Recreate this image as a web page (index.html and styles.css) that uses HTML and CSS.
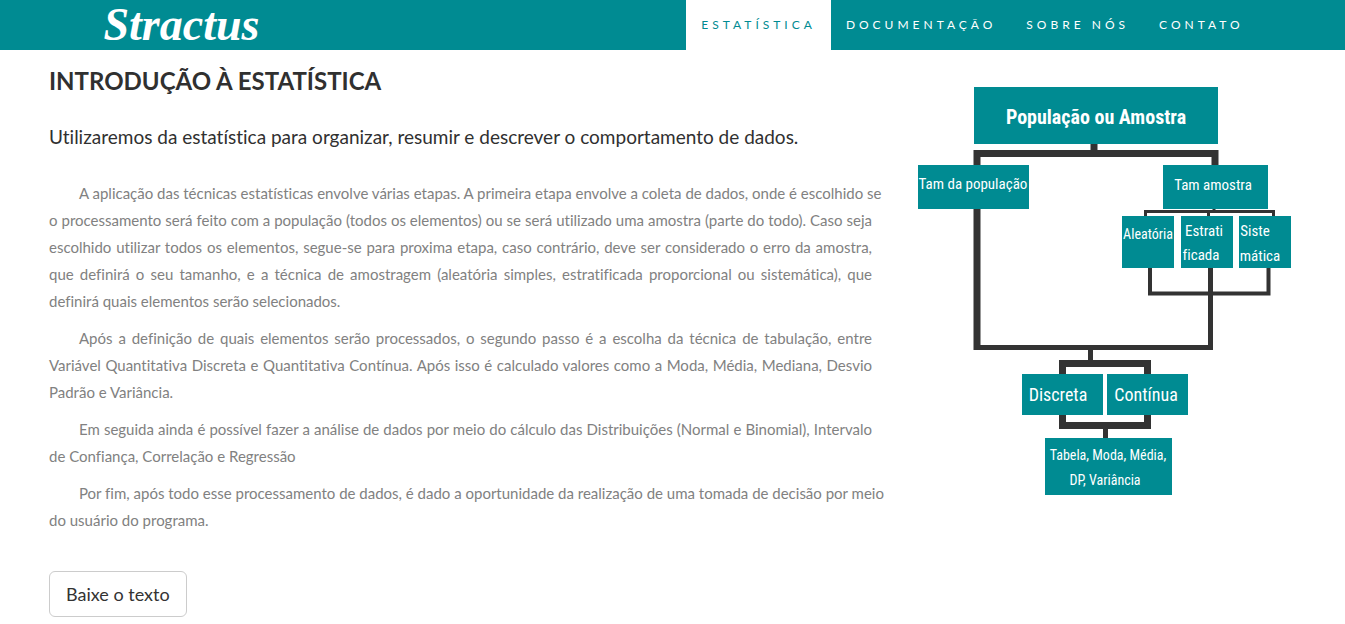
FILE: index.html
```html
<!DOCTYPE html>
<html lang="pt-br">
<head>
<meta charset="utf-8">
<meta name="viewport" content="width=device-width, initial-scale=1">
<title>Stractus - Estatística</title>
<link rel="stylesheet" href="styles.css">
</head>
<body>
<header class="navbar">
  <div class="navbar-inner">
    <a class="brand" href="#">Stractus</a>
    <nav class="menu" aria-label="Principal">
      <a class="menu-link active" href="#" aria-current="page">Estatística</a>
      <a class="menu-link" href="#">Documentação</a>
      <a class="menu-link" href="#">Sobre nós</a>
      <a class="menu-link" href="#">Contato</a>
    </nav>
  </div>
</header>
<main class="content">
  <article class="intro">
    <h1 class="title">Introdução à Estatística</h1>
    <h2 class="lead">Utilizaremos da estatística para organizar, resumir e descrever o comportamento de dados.</h2>
    <p class="text">
      <span class="line">A aplicação das técnicas estatísticas envolve várias etapas. A primeira etapa envolve a coleta de dados, onde é escolhido se</span>
      <span class="line">o processamento será feito com a população (todos os elementos) ou se será utilizado uma amostra (parte do todo). Caso seja</span>
      <span class="line">escolhido utilizar todos os elementos, segue-se para proxima etapa, caso contrário, deve ser considerado o erro da amostra,</span>
      <span class="line">que definirá o seu tamanho, e a técnica de amostragem (aleatória simples, estratificada proporcional ou sistemática), que</span>
      definirá quais elementos serão selecionados.
    </p>
    <p class="text">Após a definição de quais elementos serão processados, o segundo passo é a escolha da técnica de tabulação, entre Variável Quantitativa Discreta e Quantitativa Contínua. Após isso é calculado valores como a Moda, Média, Mediana, Desvio Padrão e Variância.</p>
    <p class="text">Em seguida ainda é possível fazer a análise de dados por meio do cálculo das Distribuições (Normal e Binomial), Intervalo de Confiança, Correlação e Regressão</p>
    <p class="text">
      <span class="line">Por fim, após todo esse processamento de dados, é dado a oportunidade da realização de uma tomada de decisão por meio</span>
      do usuário do programa.
    </p>
    <button class="download" type="button">Baixe o texto</button>
  </article>
  <figure class="figure">
    <svg class="diagram" viewBox="0 0 396 430" role="img" aria-label="Etapas da análise estatística">
      <g class="lines">
        <path stroke-width="7" d="M192 68V77M75 274V77.500H313V90"/>
        <path stroke-width="5" d="M72 271.500H308.500V190M188.500 272V285"/>
        <path stroke-width="3" d="M243.500 140V135.500H371.500V140M306.500 135V140M312 132V135"/>
        <path stroke-width="4" d="M248 191V217.500H366.500V191"/>
        <path stroke-width="7" d="M160.500 299V287.500H245.500V299M160.500 338V349.500H245.500V338"/>
        <path stroke-width="5" d="M203.500 352V363"/>
      </g>
      <g class="boxes">
        <rect x="72" y="11" width="244" height="57"/>
        <rect x="16" y="89" width="111" height="44"/>
        <rect x="261" y="89" width="105" height="44"/>
        <rect x="220" y="140" width="52" height="52"/>
        <rect x="279" y="140" width="52" height="52"/>
        <rect x="337" y="140" width="52" height="52"/>
        <rect x="120" y="298" width="81" height="41"/>
        <rect x="205" y="298" width="81" height="41"/>
        <rect x="143" y="362" width="127" height="57"/>
      </g>
      <g class="labels">
        <text class="label-main" x="194" y="48">População ou Amostra</text>
        <text class="label" x="71" y="113">Tam da população</text>
        <text class="label" x="311" y="114">Tam amostra</text>
        <text class="label-small" x="246" y="163">Aleatória</text>
        <text class="label" x="302" y="160">Estrati</text>
        <text class="label" x="299" y="184">ficada</text>
        <text class="label" x="353" y="160">Siste</text>
        <text class="label" x="358" y="185">mática</text>
        <text class="label-large" x="156" y="325">Discreta</text>
        <text class="label-large" x="244" y="325">Contínua</text>
        <text class="label-small" x="206" y="384">Tabela, Moda, Média,</text>
        <text class="label-small" x="203" y="409">DP, Variância</text>
      </g>
    </svg>
  </figure>
</main>
</body>
</html>
```
FILE: styles.css
```css
* {
  box-sizing: border-box;
}

body {
  margin: 0;
  background: #fff;
  color: #818181;
  font-family: Lato, "Open Sans", sans-serif;
  font-size: 15px;
  font-variant-ligatures: none;
  line-height: 27px;
}

.navbar {
  background: #008b92;
}

.navbar-inner {
  display: flex;
  justify-content: space-between;
  align-items: center;
  flex-wrap: wrap;
  max-width: 1172px;
  min-height: 50px;
  margin: 0 auto;
  padding-left: 17px;
}

.brand {
  color: #fff;
  font-family: "Liberation Serif", serif;
  font-size: 46px;
  font-style: italic;
  font-weight: 700;
  line-height: 50px;
  text-decoration: none;
}

.menu {
  display: flex;
  flex-wrap: wrap;
}

.menu-link {
  padding: 15px;
  color: #fff;
  font-size: 12px;
  letter-spacing: 4px;
  line-height: 20px;
  text-decoration: none;
  text-transform: uppercase;
}

.menu-link.active {
  background: #fff;
  color: #008b92;
}

.content {
  display: grid;
  grid-template-columns: minmax(0, 823fr) minmax(0, 396fr);
  gap: 30px;
  padding: 16px 47px 7px 49px;
}

.title {
  margin: 0 0 28px;
  color: #303030;
  font-size: 24px;
  font-weight: 700;
  line-height: 30px;
  text-transform: uppercase;
}

.lead {
  margin: 0 0 30px;
  color: #303030;
  font-size: 19px;
  font-weight: 400;
  line-height: 26px;
}

.text {
  margin: 0 0 10px;
  text-align: justify;
  text-indent: 30px;
}

/* Wide windows keep the edited line breaks; narrower ones reflow. */
@media (min-width: 1340px) {
  .line {
    display: block;
    text-align-last: justify;
    white-space: nowrap;
  }

  .line:not(:first-child) {
    text-indent: 0;
  }

  .text:has(.line) {
    text-indent: 0;
  }

  .line:first-child {
    text-indent: 30px;
  }
}

.download {
  margin-top: 27px;
  padding: 10px 16px;
  border: 1px solid #ccc;
  border-radius: 6px;
  background: #fff;
  color: #333;
  font-family: inherit;
  font-size: 18px;
  line-height: 24px;
}

.figure {
  margin: 10px 0 0;
}

.diagram {
  display: block;
  width: 100%;
}

.lines {
  fill: none;
  stroke: #333;
}

.boxes {
  fill: #008b92;
}

.labels {
  fill: #fff;
  font-family: "Liberation Sans Narrow", "Roboto Condensed", Lato, sans-serif;
  text-anchor: middle;
}

.label-main {
  font-size: 20px;
  font-weight: 700;
}

.label-large {
  font-size: 18px;
}

.label {
  font-size: 15px;
}

.label-small {
  font-size: 14px;
}
```
